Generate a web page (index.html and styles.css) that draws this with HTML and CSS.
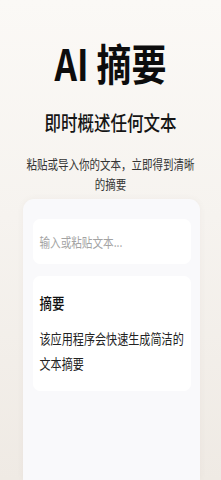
FILE: index.html
```html
<!DOCTYPE html>
<html lang="zh-CN">
<head>
<meta charset="utf-8">
<link rel="stylesheet" href="styles.css">
</head>
<body>
<main class="screen">
  <header class="hero">
    <h1 class="title"><span class="stretch">AI 摘要</span></h1>
    <p class="subtitle"><span class="stretch">即时概述任何文本</span></p>
    <p class="desc"><span class="stretch">粘贴或导入你的文本，立即得到清晰<br>的摘要</span></p>
  </header>
  <section class="panel">
    <div class="input-box"><span class="placeholder stretch">输入或粘贴文本...</span></div>
    <div class="summary">
      <h2 class="summary-title"><span class="stretch">摘要</span></h2>
      <p class="summary-text"><span class="stretch">该应用程序会快速生成简洁的<br>文本摘要</span></p>
    </div>
  </section>
</main>
</body>
</html>
```
FILE: styles.css
```css
* { box-sizing: border-box; }
html, body { margin: 0; padding: 0; }
body {
  width: 221px;
  height: 480px;
  overflow: hidden;
  font-family: "Noto Sans CJK SC", "Noto Sans", sans-serif;
  background: linear-gradient(180deg, #fbf9f6 0%, #f6f3ef 45%, #efeae4 100%);
  color: #111;
}
.screen {
  height: 480px;
  display: flex;
  flex-direction: column;
  align-items: center;
}
.stretch {
  display: inline-block;
  transform: scaleY(1.22);
  white-space: nowrap;
}
.hero {
  display: flex;
  flex-direction: column;
  align-items: center;
  text-align: center;
  padding-top: 40px;
}
.title {
  margin: 0;
  font-size: 35px;
  line-height: 46px;
  font-weight: 700;
  color: #0d0d0d;
}
.subtitle {
  margin: 26px 0 0;
  font-size: 16.5px;
  line-height: 20px;
  font-weight: 500;
  color: #151515;
}
.desc {
  margin: 26px 0 0;
  font-size: 10.5px;
  line-height: 16.4px;
  color: #333;
}
.panel {
  margin-top: 8px;
  width: 177px;
  margin-left: 1px;
  flex: 1;
  background: #f9f9fb;
  border-radius: 11px 11px 0 0;
  padding: 20px 9px 0 10px;
  display: flex;
  flex-direction: column;
  gap: 12px;
  box-shadow: 0 0 6px rgba(120, 100, 80, 0.06);
}
.input-box {
  height: 45px;
  background: #fff;
  border-radius: 7px;
  padding: 0 7px;
  display: flex;
  align-items: center;
}
.placeholder {
  font-size: 10.6px;
  color: #a3a3a3;
}
.summary {
  height: 115px;
  background: #fff;
  border-radius: 7px;
  padding: 18px 7px 0;
}
.summary-title {
  margin: 0;
  font-size: 12.5px;
  line-height: 18px;
  font-weight: 500;
  color: #111;
}
.summary-text {
  margin: 18px 0 0;
  font-size: 11.1px;
  line-height: 20.5px;
  color: #222;
}
```
